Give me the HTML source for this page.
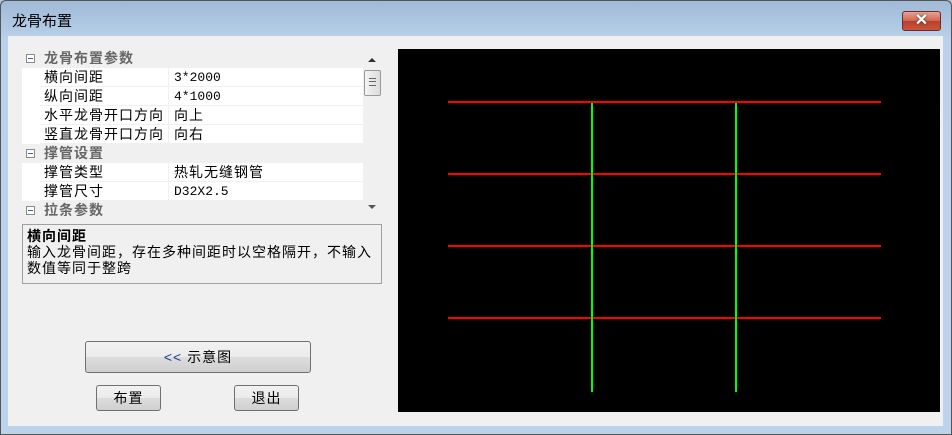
<!DOCTYPE html>
<html><head><meta charset="utf-8"><style>
*{margin:0;padding:0;box-sizing:border-box}
body{width:952px;height:435px;overflow:hidden;font-family:"Liberation Sans","Noto Sans CJK SC","WenQuanYi Zen Hei",sans-serif;font-size:14px;color:#000;background:#a9c4e0}
.win{position:absolute;left:0;top:0;width:952px;height:435px;background:linear-gradient(#9fb9d6,#b9d1ea 40px,#bcd3ec);box-shadow:inset 0 0 0 1px #555;border-radius:6px 6px 0 0}
.title{position:absolute;left:12px;top:10px;font-size:15px;color:#000}
.close{position:absolute;left:902px;top:11px;width:39px;height:20px;border:1px solid #6b2c2c;border-radius:3px;background:linear-gradient(#e8a292,#d1644e 50%,#b8402a 50%,#c8553c);color:#fff;font-weight:bold;text-align:center;line-height:18px;font-size:16px;text-shadow:0 0 2px #333}
.client{position:absolute;left:8px;top:36px;width:935px;height:390px;background:#f0f0f0}
.grid{position:absolute;left:22px;top:49px;width:360px;height:167px;background:#f0f0f0;overflow:hidden}
.row{position:absolute;left:0;width:341px;height:19px;font-size:14px;line-height:19px;letter-spacing:1px}
.grp{color:#666;font-weight:bold;background:#f0f0f0}
.grp .b{position:absolute;left:4px;top:5px;width:9px;height:9px;border:1px solid #8a8a8a;background:#fff}
.grp .b:after{content:"";position:absolute;left:1px;top:3px;width:5px;height:1px;background:#3a5fa8}
.grp span{position:absolute;left:22px}
.it{background:#fff}
.it .k{position:absolute;left:18px;width:129px;height:18px;padding-left:4px;background:#fff;border-right:1px solid #f0f0f0}
.it .v{position:absolute;left:148px;height:18px;padding-left:4px;font-family:"Liberation Mono","Noto Sans CJK SC",monospace;font-size:13px;letter-spacing:0}
.it:after{content:"";position:absolute;left:18px;right:0;bottom:0;height:1px;background:#f0f0f0}
.sb{position:absolute;left:341px;top:0;width:19px;height:167px;background:#f0f0f0}
.thumb{position:absolute;left:1px;top:21px;width:17px;height:26px;border:1px solid #999;border-radius:2px;background:linear-gradient(90deg,#f4f4f4,#dcdcdc)}
.desc{position:absolute;left:22px;top:224px;width:360px;height:60px;border:1px solid #a0a0a0;background:#f0f0f0;padding:3px 4px;line-height:16px;font-size:14px;letter-spacing:1px}
.btn{position:absolute;border:1px solid #707070;border-radius:3px;background:linear-gradient(#f2f2f2,#ebebeb 50%,#dddddd 50%,#cfcfcf);text-align:center;font-size:14px;letter-spacing:1px}
.cv{position:absolute;left:398px;top:49px;width:542px;height:363px;background:#000}
.sans{font-family:'Liberation Sans','Noto Sans CJK SC',sans-serif!important;font-size:14px!important;letter-spacing:1px!important}
</style></head><body>
<div class="win">
<div class="title">龙骨布置</div>
<div class="close">✕</div>
<div class="client"></div>
<div class="grid">
<div class="row grp" style="top:0"><div class="b"></div><span>龙骨布置参数</span></div>
<div class="row it" style="top:19px"><div class="k">横向间距</div><div class="v">3*2000</div></div>
<div class="row it" style="top:38px"><div class="k">纵向间距</div><div class="v">4*1000</div></div>
<div class="row it" style="top:57px"><div class="k">水平龙骨开口方向</div><div class="v sans">向上</div></div>
<div class="row it" style="top:76px"><div class="k">竖直龙骨开口方向</div><div class="v sans">向右</div></div>
<div class="row grp" style="top:95px"><div class="b"></div><span>撑管设置</span></div>
<div class="row it" style="top:114px"><div class="k">撑管类型</div><div class="v sans">热轧无缝钢管</div></div>
<div class="row it" style="top:133px"><div class="k">撑管尺寸</div><div class="v">D32X2.5</div></div>
<div class="row grp" style="top:152px"><div class="b"></div><span>拉条参数</span></div>
<div class="sb"><div style="position:absolute;left:5px;top:9px;border:4px solid transparent;border-bottom:4px solid #333;border-top:0"></div><div class="thumb"><div style="margin:7px 4px;height:8px;border-top:1px solid #666;border-bottom:1px solid #666"><div style="margin-top:2px;border-top:1px solid #666"></div></div></div><div style="position:absolute;left:5px;top:156px;border:4px solid transparent;border-top:4px solid #555;border-bottom:0"></div></div>
</div>
<div class="desc"><b>横向间距</b><br>输入龙骨间距，存在多种间距时以空格隔开，不输入<br>数值等同于整跨</div>
<div class="btn" style="left:85px;top:341px;width:226px;height:32px;line-height:30px"><span style="color:#1a3a8a">&lt;&lt;</span> 示意图</div>
<div class="btn" style="left:96px;top:385px;width:65px;height:26px;line-height:24px">布置</div>
<div class="btn" style="left:234px;top:385px;width:65px;height:26px;line-height:24px">退出</div>
<div class="cv"></div>
<svg style="position:absolute;left:0;top:0" width="952" height="435">
<g stroke="#ff0000" stroke-width="2"><line x1="448" y1="102" x2="881" y2="102"/><line x1="448" y1="174" x2="881" y2="174"/><line x1="448" y1="246" x2="881" y2="246"/><line x1="448" y1="318" x2="881" y2="318"/></g>
<g stroke="#00ff00" stroke-width="2"><line x1="592" y1="103" x2="592" y2="392"/><line x1="736" y1="103" x2="736" y2="392"/></g>
</svg>
</div>
</body></html>
